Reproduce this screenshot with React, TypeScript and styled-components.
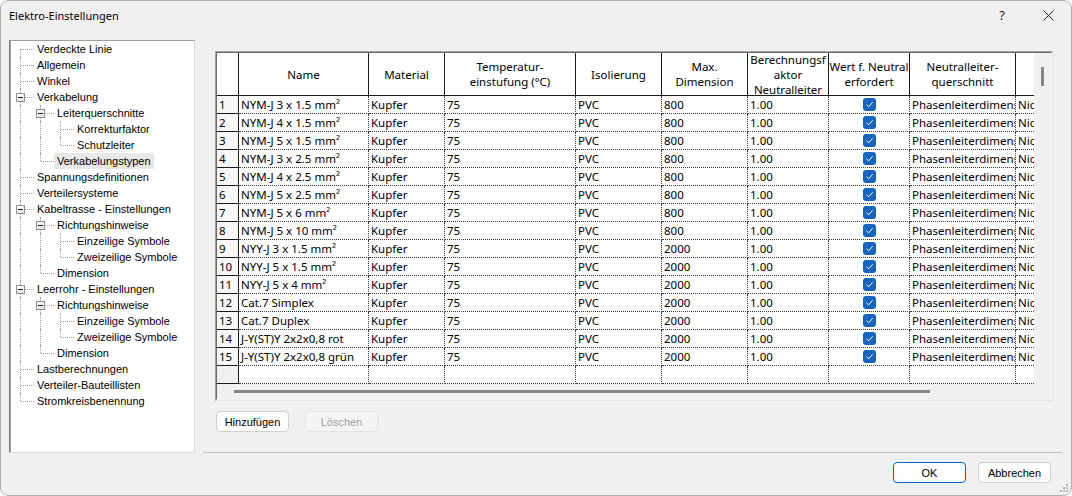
import React from 'react';
import styled, { createGlobalStyle } from 'styled-components';

const GlobalStyle = createGlobalStyle`
  html, body {
    margin: 0;
    padding: 0;
    background: #ffffff;
  }
  body {
    font-family: "Noto Sans", "Liberation Sans", sans-serif;
  }
  * {
    box-sizing: border-box;
  }
`;

type TreeNode = { label: string; level: number; open?: boolean; selected?: boolean };

const tree: TreeNode[] = [
  { label: 'Verdeckte Linie', level: 0 },
  { label: 'Allgemein', level: 0 },
  { label: 'Winkel', level: 0 },
  { label: 'Verkabelung', level: 0, open: true },
  { label: 'Leiterquerschnitte', level: 1, open: true },
  { label: 'Korrekturfaktor', level: 2 },
  { label: 'Schutzleiter', level: 2 },
  { label: 'Verkabelungstypen', level: 1, selected: true },
  { label: 'Spannungsdefinitionen', level: 0 },
  { label: 'Verteilersysteme', level: 0 },
  { label: 'Kabeltrasse - Einstellungen', level: 0, open: true },
  { label: 'Richtungshinweise', level: 1, open: true },
  { label: 'Einzeilige Symbole', level: 2 },
  { label: 'Zweizeilige Symbole', level: 2 },
  { label: 'Dimension', level: 1 },
  { label: 'Leerrohr - Einstellungen', level: 0, open: true },
  { label: 'Richtungshinweise', level: 1, open: true },
  { label: 'Einzeilige Symbole', level: 2 },
  { label: 'Zweizeilige Symbole', level: 2 },
  { label: 'Dimension', level: 1 },
  { label: 'Lastberechnungen', level: 0 },
  { label: 'Verteiler-Bauteillisten', level: 0 },
  { label: 'Stromkreisbenennung', level: 0 },
];

const hasNext = (i: number) => {
  const lvl = tree[i].level;
  for (let j = i + 1; j < tree.length; j++) {
    if (tree[j].level < lvl) return false;
    if (tree[j].level === lvl) return true;
  }
  return false;
};

const ancestorAt = (i: number, lvl: number) => {
  for (let k = i - 1; k >= 0; k--) if (tree[k].level === lvl) return k;
  return -1;
};

const cables = [
  ['NYM-J 3 x 1.5 mm²', '800'],
  ['NYM-J 4 x 1.5 mm²', '800'],
  ['NYM-J 5 x 1.5 mm²', '800'],
  ['NYM-J 3 x 2.5 mm²', '800'],
  ['NYM-J 4 x 2.5 mm²', '800'],
  ['NYM-J 5 x 2.5 mm²', '800'],
  ['NYM-J 5 x 6 mm²', '800'],
  ['NYM-J 5 x 10 mm²', '800'],
  ['NYY-J 3 x 1.5 mm²', '2000'],
  ['NYY-J 5 x 1.5 mm²', '2000'],
  ['NYY-J 5 x 4 mm²', '2000'],
  ['Cat.7 Simplex', '2000'],
  ['Cat.7 Duplex', '2000'],
  ['J-Y(ST)Y 2x2x0,8 rot', '2000'],
  ['J-Y(ST)Y 2x2x0,8 grün', '2000'],
];

const headers: string[][] = [
  [],
  ['Name'],
  ['Material'],
  ['Temperatur-', 'einstufung (°C)'],
  ['Isolierung'],
  ['Max.', 'Dimension'],
  ['Berechnungsf', 'aktor', 'Neutralleiter'],
  ['Wert f. Neutral', 'erfordert'],
  ['Neutralleiter-', 'querschnitt'],
  [],
];

const Window = styled.div`
  position: relative;
  width: 1072px;
  height: 496px;
  border: 1px solid #b3b3b3;
  border-radius: 8px;
  background: #f0f0f0;
  display: flex;
  flex-direction: column;
  overflow: hidden;
`;

const TitleBar = styled.div`
  height: 28px;
  display: flex;
  align-items: center;
  padding-left: 8px;
  font-size: 11px;
  color: #000;
`;

const TitleText = styled.span`
  flex: 1;
`;

const TitleButton = styled.div`
  width: 46px;
  height: 28px;
  display: flex;
  align-items: center;
  justify-content: center;
  font-size: 13px;
  color: #1a1a1a;
`;

const Main = styled.div`
  display: flex;
  gap: 8px;
  padding: 11px 9px 0 8px;
`;

const TreeBox = styled.div`
  width: 186px;
  height: 413px;
  background: #fff;
  border-style: solid;
  border-width: 1px;
  border-color: #a0a0a0 #dcdcdc #dcdcdc #7d7d7d;
  box-shadow: inset 1px 0 0 #a0a0a0;
  font-family: "Liberation Sans", Arial, sans-serif;
  font-size: 11px;
  color: #000;
`;

const TreeRow = styled.div`
  display: flex;
  height: 16px;
  align-items: center;
`;

const Guide = styled.span<{ $line: boolean }>`
  position: relative;
  flex: none;
  width: 20px;
  height: 16px;
  &::before {
    content: '';
    display: ${(p) => (p.$line ? 'block' : 'none')};
    position: absolute;
    left: 10px;
    top: 0;
    bottom: 0;
    border-left: 1px dotted #a0a0a0;
  }
`;

const Connector = styled.span<{ $up: boolean; $down: boolean }>`
  position: relative;
  flex: none;
  width: 24px;
  height: 16px;
  &::before {
    content: '';
    position: absolute;
    left: 10px;
    top: ${(p) => (p.$up ? 0 : 8)}px;
    bottom: ${(p) => (p.$down ? 0 : 8)}px;
    border-left: 1px dotted #a0a0a0;
  }
  &::after {
    content: '';
    position: absolute;
    left: 11px;
    right: 0;
    top: 8px;
    border-top: 1px dotted #a0a0a0;
  }
`;

const Expander = styled.span`
  position: absolute;
  left: 6px;
  top: 4px;
  width: 9px;
  height: 9px;
  border: 1px solid #919191;
  background: linear-gradient(#ffffff, #e6e6e6);
  z-index: 1;
  &::after {
    content: '';
    position: absolute;
    left: 1px;
    top: 3px;
    width: 5px;
    height: 1px;
    background: #1e1e1e;
  }
`;

const TreeLabel = styled.span<{ $selected?: boolean }>`
  height: 16px;
  line-height: 16px;
  padding: 0 3px;
  white-space: nowrap;
  background: ${(p) => (p.$selected ? '#e8e8e8' : 'transparent')};
`;

const Panel = styled.div`
  width: 859px;
  height: 413px;
  border-bottom: 1px solid #c2c2c2;
  padding: 11px 9px 0 12px;
  display: flex;
  flex-direction: column;
`;

const GridFrame = styled.div`
  width: 838px;
  height: 350px;
  border-style: solid;
  border-width: 1px;
  border-color: #a0a0a0 #e3e3e3 #e3e3e3 #a0a0a0;
`;

const GridInner = styled.div`
  height: 100%;
  display: flex;
  border-style: solid;
  border-width: 1px;
  border-color: #696969 #f0f0f0 #f0f0f0 #696969;
`;

const Viewport = styled.div`
  width: 817px;
  display: flex;
  flex-direction: column;
  overflow: hidden;
`;

const Table = styled.div`
  display: grid;
  grid-template-columns: 22px 130px 76px 131px 86px 86px 81px 81px 106px 120px;
  grid-auto-rows: 18px;
  grid-template-rows: 43px;
  width: max-content;
  background: #fff;
  font-size: 11.5px;
  color: #000;
`;

const HeadCell = styled.div`
  display: flex;
  flex-direction: column;
  align-items: center;
  justify-content: center;
  text-align: center;
  line-height: 15px;
  white-space: nowrap;
  overflow: hidden;
  border-right: 1px solid #1a1a1a;
  border-bottom: 1px solid #1a1a1a;
  background: #fff;
`;

const RowHead = styled.div<{ $empty?: boolean }>`
  padding-left: 2px;
  line-height: 17px;
  border-right: 1px solid #1a1a1a;
  border-bottom: 1px solid #1a1a1a;
  background: ${(p) => (p.$empty ? '#f0f0f0' : '#f7f7f7')};
`;

const Cell = styled.div<{ $center?: boolean }>`
  display: flex;
  align-items: center;
  justify-content: ${(p) => (p.$center ? 'center' : 'flex-start')};
  padding-left: ${(p) => (p.$center ? 0 : 2)}px;
  white-space: nowrap;
  overflow: hidden;
  border-right: 1px dotted #3c3c3c;
  border-bottom: 1px dotted #3c3c3c;
`;

const Check = styled.span`
  width: 13px;
  height: 13px;
  border-radius: 3px;
  background: #1565c0;
  display: flex;
  align-items: center;
  justify-content: center;
`;

const HScroll = styled.div`
  height: 15px;
  padding: 6px 0 0 17px;
  background: #f0f0f0;
`;

const HThumb = styled.div`
  width: 696px;
  height: 3px;
  background: #868686;
`;

const VScroll = styled.div`
  width: 17px;
  padding: 14px 0 0 7px;
  background: #f0f0f0;
`;

const VThumb = styled.div`
  width: 3px;
  height: 19px;
  background: #868686;
`;

const ButtonRow = styled.div`
  display: flex;
  gap: 16px;
  margin-top: 10px;
  padding-left: 1px;
`;

const Button = styled.button<{ $default?: boolean }>`
  width: 73px;
  height: 21px;
  padding: 0;
  border: 1px solid ${(p) => (p.$default ? '#0067c0' : '#d0d0d0')};
  border-radius: 4px;
  background: #fdfdfd;
  font-family: "Liberation Sans", Arial, sans-serif;
  font-size: 11px;
  color: #000;
  &:disabled {
    background: #f5f5f5;
    border-color: #e3e3e3;
    color: #a0a0a0;
  }
`;

const Footer = styled.div`
  flex: 1;
  display: flex;
  justify-content: flex-end;
  gap: 12px;
  padding: 9px 20px 0 0;
`;

const Grip = styled.svg`
  position: absolute;
  right: 3px;
  bottom: 3px;
`;

const CheckMark = () => (
  <svg width="9" height="9" viewBox="0 0 9 9">
    <path d="M1.5 4.8 L3.6 6.8 L7.6 2.4" fill="none" stroke="#fff" strokeWidth="1" />
  </svg>
);

const Tree = () => (
  <TreeBox>
    {tree.map((n, i) => {
      const guides = [];
      for (let a = 0; a < n.level; a++) {
        guides.push(<Guide key={a} $line={hasNext(ancestorAt(i, a))} />);
      }
      return (
        <TreeRow key={i}>
          {guides}
          <Connector $up={i > 0} $down={hasNext(i)}>
            {n.open && <Expander />}
          </Connector>
          <TreeLabel $selected={n.selected}>{n.label}</TreeLabel>
        </TreeRow>
      );
    })}
  </TreeBox>
);

const CableGrid = () => (
  <GridFrame>
    <GridInner>
      <Viewport>
        <Table>
          {headers.map((h, i) => (
            <HeadCell key={i}>
              {h.map((line) => (
                <span key={line}>{line}</span>
              ))}
            </HeadCell>
          ))}
          {cables.map(([name, dim], r) => (
            <React.Fragment key={r}>
              <RowHead>{r + 1}</RowHead>
              <Cell>{name}</Cell>
              <Cell>Kupfer</Cell>
              <Cell>75</Cell>
              <Cell>PVC</Cell>
              <Cell>{dim}</Cell>
              <Cell>1.00</Cell>
              <Cell $center>
                <Check>
                  <CheckMark />
                </Check>
              </Cell>
              <Cell>Phasenleiterdimension</Cell>
              <Cell>Nicht festgelegt</Cell>
            </React.Fragment>
          ))}
          <RowHead $empty />
          {Array.from({ length: 9 }).map((_, i) => (
            <Cell key={i} />
          ))}
        </Table>
        <HScroll>
          <HThumb />
        </HScroll>
      </Viewport>
      <VScroll>
        <VThumb />
      </VScroll>
    </GridInner>
  </GridFrame>
);

const App: React.FC = () => {
  return (
    <>
      <GlobalStyle />
      <Window>
        <TitleBar>
          <TitleText>Elektro-Einstellungen</TitleText>
          <TitleButton>?</TitleButton>
          <TitleButton>
            <svg width="11" height="11" viewBox="0 0 11 11">
              <path d="M0.5 0.5 L10.5 10.5 M10.5 0.5 L0.5 10.5" stroke="#1a1a1a" strokeWidth="1" />
            </svg>
          </TitleButton>
        </TitleBar>
        <Main>
          <Tree />
          <Panel>
            <CableGrid />
            <ButtonRow>
              <Button>Hinzufügen</Button>
              <Button disabled>Löschen</Button>
            </ButtonRow>
          </Panel>
        </Main>
        <Footer>
          <Button $default>OK</Button>
          <Button>Abbrechen</Button>
        </Footer>
        <Grip width="8" height="8" viewBox="0 0 8 8">
          {[
            [6, 0],
            [6, 3],
            [3, 3],
            [6, 6],
            [3, 6],
            [0, 6],
          ].map(([x, y]) => (
            <rect key={`${x}-${y}`} x={x} y={y} width="2" height="2" fill="#b8b8b8" />
          ))}
        </Grip>
      </Window>
    </>
  );
};

export default App;
